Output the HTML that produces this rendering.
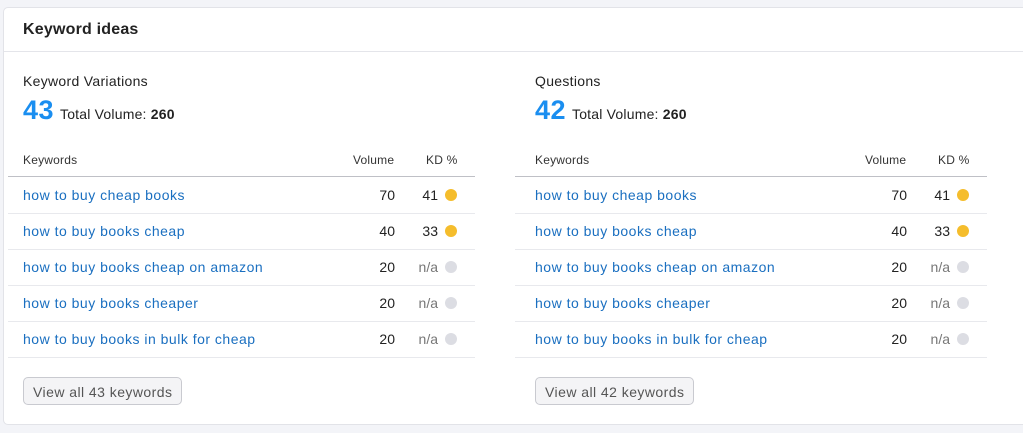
<!DOCTYPE html>
<html><head><style>
body{margin:0;width:1023px;height:433px;background:#f3f4f8;font-family:"Liberation Sans",sans-serif;position:relative;overflow:hidden;color:#333}
.card{position:absolute;left:3px;top:7px;width:1030px;height:418px;background:#fff;border:1px solid #e2e3e8;border-radius:5px;box-sizing:border-box}
.hdr{position:absolute;left:0;top:0;right:0;height:43px;border-bottom:1px solid #e4e5ea}
.hdr b{position:absolute;left:19px;top:13px;font-size:16px;color:#222;letter-spacing:0.2px}
.t{position:absolute;font-size:14px;color:#222;white-space:nowrap;letter-spacing:0.3px}
.big{position:absolute;font-size:27px;font-weight:bold;color:#1a8ef0;letter-spacing:0.5px}
.th{position:absolute;font-size:12px;color:#333;letter-spacing:0.2px}
.row{position:absolute;height:36px;border-bottom:1px solid #e8e9ed}
.kw{position:absolute;left:15px;top:10px;font-size:14px;color:#1a6fc0;white-space:nowrap;letter-spacing:0.5px}
.v{position:absolute;top:10px;font-size:14px;color:#222;text-align:right;width:40px}
.kd{position:absolute;top:10px;font-size:14px;text-align:right;width:40px}
.dot{position:absolute;top:12px;width:12px;height:12px;border-radius:50%}
.btn{position:absolute;height:28px;border:1px solid #c9cad0;border-radius:5px;background:#f4f4f6;font-size:14px;color:#555;box-sizing:border-box;padding:6px 9px;white-space:nowrap;letter-spacing:0.45px}
</style></head><body>
<div class="card"><div class="hdr"><b>Keyword ideas</b></div></div>

<div id="L"></div>
<script>
function build(ox,title,n,tl){
 let h='';
 h+=`<div class="t" style="left:${ox+23}px;top:73px">${title}</div>`;
 h+=`<div class="big" style="left:${ox+23}px;top:95px">${n}</div>`;
 h+=`<div class="t" style="left:${ox+60}px;top:106px;letter-spacing:0.2px">Total Volume: <b>260</b></div>`;
 h+=`<div class="th" style="left:${ox+23}px;top:153px">Keywords</div>`;
 h+=`<div class="th" style="left:${ox+353}px;top:153px">Volume</div>`;
 h+=`<div class="th" style="left:${ox+426}px;top:153px">KD %</div>`;
 h+=`<div style="position:absolute;left:${tl}px;top:176px;width:${475+ox-tl}px;height:1px;background:#bfc0c6"></div>`;
 const rows=[["how to buy cheap books","70","41",1],["how to buy books cheap","40","33",1],["how to buy books cheap on amazon","20","n/a",0],["how to buy books cheaper","20","n/a",0],["how to buy books in bulk for cheap","20","n/a",0]];
 rows.forEach((r,i)=>{
  h+=`<div class="row" style="left:${tl}px;top:${177+i*36}px;width:${475+ox-tl}px"><div class="kw" style="left:${ox+23-tl}px">${r[0]}</div><div class="v" style="left:${ox+355-tl}px">${r[1]}</div><div class="kd" style="left:${ox+398-tl}px;color:${r[3]?'#222':'#777'}">${r[2]}</div><div class="dot" style="left:${ox+445-tl}px;background:${r[3]?'#f5bd2c':'#dcdde3'}"></div></div>`;
 });
 h+=`<div class="btn" style="left:${ox+23}px;top:377px">View all ${n} keywords</div>`;
 return h;
}
document.getElementById('L').innerHTML=build(0,'Keyword Variations','43',8)+build(512,'Questions','42',515);
</script>
</body></html>
